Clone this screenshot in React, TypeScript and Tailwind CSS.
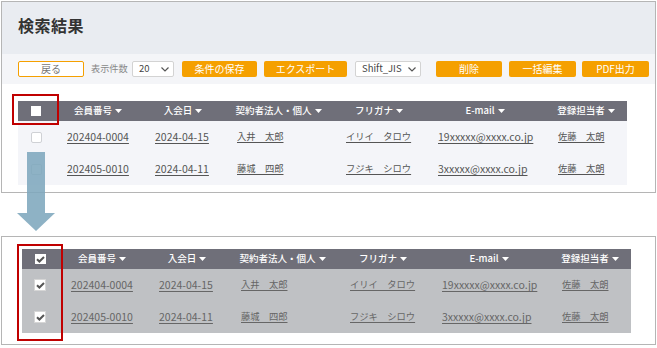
import type { ReactNode } from 'react'

type Row = {
  no: string
  date: string
  name: string
  kana: string
  email: string
  staff: string
}

const rows: Row[] = [
  { no: '202404-0004', date: '2024-04-15', name: '入井　太郎', kana: 'イリイ　タロウ', email: '19xxxxx@xxxx.co.jp', staff: '佐藤　太朗' },
  { no: '202405-0010', date: '2024-04-11', name: '藤城　四郎', kana: 'フジキ　シロウ', email: '3xxxxx@xxxx.co.jp', staff: '佐藤　太朗' },
]

const headers = ['会員番号', '入会日', '契約者法人・個人', 'フリガナ', 'E-mail', '登録担当者']
// column widths incl. 13px side padding, checkbox column first
const widths = ['w-[36px]', 'w-[88px]', 'w-[82px]', 'w-[109px]', 'w-[92px]', 'w-[120px]', 'w-[82px]']
// which data columns are Japanese text (rendered a bit smaller)
const jp = [false, false, true, true, false, true]

const Caret = () => (
  <svg className="inline-block ml-[3px] mb-[1px]" width="7" height="4" viewBox="0 0 7 4">
    <path d="M0 0h7L3.5 4z" fill="#ffffff" />
  </svg>
)

const Check = () => (
  <svg width="9" height="7" viewBox="0 0 9 7">
    <path d="M1 3.2l2.4 2.3L8 1" fill="none" stroke="#555" strokeWidth="2" />
  </svg>
)

function Box({ checked, head }: { checked: boolean; head?: boolean }) {
  if (checked)
    return (
      <span className={`mx-auto flex items-center justify-center bg-white ${head ? 'w-[11px] h-[10px]' : 'w-[12px] h-[12px] border border-[#d6d6d6]'}`}>
        <Check />
      </span>
    )
  return head ? (
    <span className="mx-auto block w-[10px] h-[10px] bg-white" />
  ) : (
    <span className="mx-auto block w-[11px] h-[11px] bg-white border border-[#cfd1d5] rounded-[2px]" />
  )
}

function ResultTable({ checked }: { checked: boolean }) {
  const rowBg = checked ? 'bg-[#bfc1c4]' : 'bg-[#f4f5f9]'
  const txt = checked ? 'text-[#666]' : 'text-[#555]'
  return (
    <table className="table-fixed border-collapse w-[609px]">
      <colgroup>
        {widths.map(w => <col key={w} className={w} />)}
      </colgroup>
      <thead>
        <tr className="bg-[#6f6f79] h-[20px]">
          <th className="p-0"><Box checked={checked} head /></th>
          {headers.map(h => (
            <th key={h} className="p-0 text-center text-[9.5px] font-medium text-white whitespace-nowrap leading-none">
              {h}<Caret />
            </th>
          ))}
        </tr>
      </thead>
      <tbody>
        {rows.map(r => (
          <tr key={r.no} className={`${rowBg} h-[32px]`}>
            <td className="p-0"><Box checked={checked} /></td>
            {[r.no, r.date, r.name, r.kana, r.email, r.staff].map((v, i) => (
              <td
                key={i}
                className={`p-0 pl-[13px] ${jp[i] ? 'text-[9.3px]' : 'text-[10.5px]'} ${txt} underline underline-offset-2 whitespace-nowrap`}
              >
                {v}
              </td>
            ))}
          </tr>
        ))}
      </tbody>
    </table>
  )
}

function OrangeBtn({ w, ml, children }: { w: string; ml: string; children: ReactNode }) {
  return (
    <button className={`${w} ${ml} shrink-0 h-[16px] rounded-[2px] bg-[#f5a000] text-white text-[10px] leading-none flex items-center justify-center`}>
      {children}
    </button>
  )
}

function Select({ w, ml, label }: { w: string; ml: string; label: string }) {
  return (
    <div className={`${w} ${ml} shrink-0 h-[16px] bg-white border border-[#d3d3d3] rounded-[2px] flex items-center justify-between pl-[6px] pr-[4px] text-[9.5px] text-[#444]`}>
      <span className="leading-none">{label}</span>
      <svg width="8" height="5" viewBox="0 0 8 5">
        <path d="M0.5 0.5L4 4 7.5 0.5" fill="none" stroke="#555" strokeWidth="1.2" />
      </svg>
    </div>
  )
}

export default function App() {
  return (
    <div className="relative w-[657px] h-[348px] bg-white overflow-hidden" style={{ fontFamily: '"Noto Sans CJK JP", "Noto Sans", sans-serif' }}>
      {/* Before */}
      <div className="ml-[1px] mt-[1px] w-[655px] h-[192px] border border-[#b5b5b5] flex flex-col">
        <div className="h-[52px] bg-[#e9ecf1] flex items-start pt-[12px] pl-[16px]">
          <h1 className="text-[16px] leading-[22px] font-bold text-[#333] tracking-[0.5px]">検索結果</h1>
        </div>
        <div className="h-[30px] bg-[#f4f5f8] flex items-center pl-[16px]">
          <button className="w-[66px] shrink-0 h-[16px] bg-white border border-[#f5a000] rounded-[2px] text-[10px] text-[#777] leading-none">戻る</button>
          <span className="ml-[7px] w-[37px] shrink-0 text-[9.2px] text-[#888] whitespace-nowrap">表示件数</span>
          <Select w="w-[42px]" ml="ml-[4px]" label="20" />
          <OrangeBtn w="w-[75px]" ml="ml-[8px]">条件の保存</OrangeBtn>
          <OrangeBtn w="w-[83px]" ml="ml-[7px]">エクスポート</OrangeBtn>
          <Select w="w-[66px]" ml="ml-[8px]" label="Shift_JIS" />
          <OrangeBtn w="w-[66px]" ml="ml-[15px]">削除</OrangeBtn>
          <OrangeBtn w="w-[67px]" ml="ml-[7px]">一括編集</OrangeBtn>
          <OrangeBtn w="w-[67px]" ml="ml-[6px]">PDF出力</OrangeBtn>
        </div>
        <div className="pt-[17px] pl-[16px]">
          <ResultTable checked={false} />
        </div>
      </div>

      {/* After */}
      <div className="ml-[1px] mt-[43px] w-[655px] h-[109px] border border-[#b5b5b5] pt-[12px] pl-[20px]">
        <ResultTable checked />
      </div>

      {/* arrow */}
      <svg className="absolute left-[17px] top-[152px]" width="38" height="79" viewBox="0 0 38 79">
        <path d="M10 0h18v61h10L19 79 0 61h10z" fill="#7ea7bd" opacity="0.88" />
      </svg>

      {/* highlight boxes */}
      <div className="absolute left-[12px] top-[94px] w-[47px] h-[31px] border-2 border-[#c00000]" />
      <div className="absolute left-[17px] top-[244px] w-[46px] h-[97px] border-2 border-[#c00000]" />
    </div>
  )
}
